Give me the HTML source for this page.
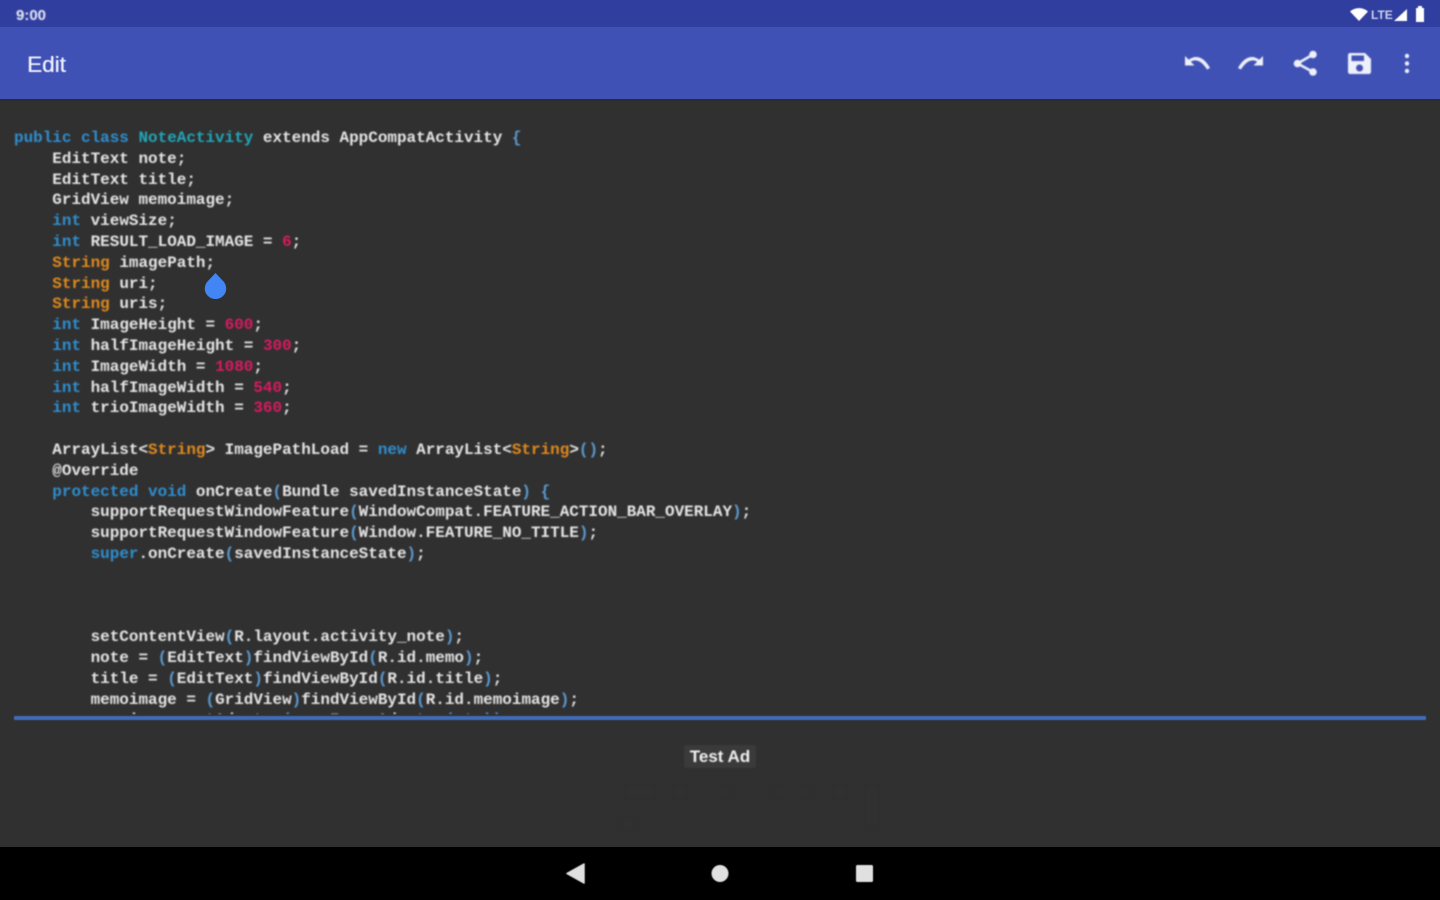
<!DOCTYPE html>
<html><head><meta charset="utf-8">
<style>
html,body{margin:0;padding:0;width:1440px;height:900px;overflow:hidden;background:#303030}
body{position:relative;font-family:"Liberation Sans",sans-serif}
.abs{position:absolute}
#status{left:0;top:0;width:1440px;height:27px;background:#303f9f}
#bar{left:0;top:27px;width:1440px;height:72px;background:#3f51b5}
#shadow{left:0;top:99px;width:1440px;height:3px;background:linear-gradient(#2a2a2a,#303030)}
#time{left:16px;top:8px;font-size:15px;line-height:15px;font-weight:bold;color:#e8eaf6;filter:blur(.7px)}
#title{left:27px;top:51px;font-size:22.5px;line-height:28px;color:#eef0fa;text-shadow:.4px 0 0 #eef0fa;filter:blur(.6px)}
#code{left:14px;top:128px;width:1412px;height:586px;overflow:hidden;margin:0;font-family:"Liberation Mono",monospace;font-size:15.96px;line-height:20.8px;color:#e6e6e6;font-weight:bold;filter:blur(.85px);white-space:pre}
.k{color:#2f8fd0}.c{color:#22a6b8}.s{color:#e08a1e}.n{color:#d81b60}.p{color:#5b9bd0}
#line{left:14px;top:716px;width:1412px;height:4px;background:#3f6cb8;filter:blur(.4px)}
#ad{left:684px;top:745px;width:72px;height:23px;background:#3a3a3a;border-radius:2px;color:#f2f2f2;font-size:17px;line-height:23px;text-align:center;font-weight:bold;filter:blur(.7px);white-space:nowrap}
#nav{left:0;top:847px;width:1440px;height:53px;background:#000}
svg{position:absolute;overflow:visible}
</style></head><body>
<div class="abs" id="status"></div>
<div class="abs" id="bar"></div>
<div class="abs" id="shadow"></div>
<div class="abs" id="time">9:00</div>
<div class="abs" id="title">Edit</div>

<svg style="left:1340px;top:0;filter:blur(.6px)" width="100" height="27" viewBox="0 0 100 27">
<path d="M10 11.500C15 7 23 7 28 11.500L19 21Z" fill="#fff"/>
<text x="31" y="19" font-family="Liberation Sans" font-size="12" font-weight="bold" fill="#c9cee8">LTE</text>
<path d="M54 21L67 9V21Z" fill="#fff"/>
<path d="M76 8H78V6H82V8H84V22H76Z" fill="#fff"/>
</svg>

<svg style="left:1170px;top:40px;filter:blur(.8px)" width="260" height="48" viewBox="0 0 260 48" fill="#eef0fa">
<path d="M15 16V25.500H24.500L20.800 21.800C23.600 19.600 30.500 18.800 37 29.500L40 28C34 16.500 25 14.500 18.800 19.800Z"/>
<path d="M93 16V25.500H83.500L87.200 21.800C84.400 19.600 77.500 18.800 71 29.500L68 28C74 16.500 83 14.500 89.200 19.800Z"/>
<g>
<circle cx="143" cy="14.500" r="3.800"/><circle cx="143" cy="32" r="3.800"/><circle cx="127.500" cy="23.500" r="3.800"/>
<path d="M127.500 23.500L143 14.500M127.500 23.500L143 32" stroke="#eef0fa" stroke-width="2.500" fill="none"/>
</g>
<path fill-rule="evenodd" d="M180 13H195L201 19V32C201 33 200 34 199 34H180C179 34 178 33 178 32V15C178 14 179 13 180 13ZM181.500 15.500V21H194V15.500ZM189.500 24.500A3.500 3.500 0 1 0 189.600 31.500A3.500 3.500 0 1 0 189.500 24.500Z"/>
<circle cx="237" cy="16" r="2.200"/><circle cx="237" cy="23.500" r="2.200"/><circle cx="237" cy="31" r="2.200"/>
</svg>

<pre class="abs" id="code"><span class="k">public class</span> <span class="c">NoteActivity</span> extends AppCompatActivity <span class="p">{</span>
    EditText note;
    EditText title;
    GridView memoimage;
    <span class="k">int</span> viewSize;
    <span class="k">int</span> RESULT_LOAD_IMAGE = <span class="n">6</span>;
    <span class="s">String</span> imagePath;
    <span class="s">String</span> uri;
    <span class="s">String</span> uris;
    <span class="k">int</span> ImageHeight = <span class="n">600</span>;
    <span class="k">int</span> halfImageHeight = <span class="n">300</span>;
    <span class="k">int</span> ImageWidth = <span class="n">1080</span>;
    <span class="k">int</span> halfImageWidth = <span class="n">540</span>;
    <span class="k">int</span> trioImageWidth = <span class="n">360</span>;

    ArrayList&lt;<span class="s">String</span>&gt; ImagePathLoad = <span class="k">new</span> ArrayList&lt;<span class="s">String</span>&gt;<span class="p">()</span>;
    @Override
    <span class="k">protected void</span> onCreate<span class="p">(</span>Bundle savedInstanceState<span class="p">)</span> <span class="p">{</span>
        supportRequestWindowFeature<span class="p">(</span>WindowCompat.FEATURE_ACTION_BAR_OVERLAY<span class="p">)</span>;
        supportRequestWindowFeature<span class="p">(</span>Window.FEATURE_NO_TITLE<span class="p">)</span>;
        <span class="k">super</span>.onCreate<span class="p">(</span>savedInstanceState<span class="p">)</span>;



        setContentView<span class="p">(</span>R.layout.activity_note<span class="p">)</span>;
        note = <span class="p">(</span>EditText<span class="p">)</span>findViewById<span class="p">(</span>R.id.memo<span class="p">)</span>;
        title = <span class="p">(</span>EditText<span class="p">)</span>findViewById<span class="p">(</span>R.id.title<span class="p">)</span>;
        memoimage = <span class="p">(</span>GridView<span class="p">)</span>findViewById<span class="p">(</span>R.id.memoimage<span class="p">)</span>;
        memoimage.setAdapter<span class="p">(</span>new ImageAdapter<span class="p">(</span>ctx<span class="p">))</span>;</pre>

<svg style="left:200px;top:270px" width="30" height="32" viewBox="0 0 30 32">
<path d="M15.500 3L24 12C27 16 27 22 23.500 25.500C21.500 27.800 18.500 29 15.500 29C12.500 29 9.500 27.800 7.500 25.500C4 22 4 16 7 12Z" fill="#4285f4"/>
</svg>

<div class="abs" id="line"></div>
<div class="abs" id="ad">Test Ad</div>

<svg style="left:620px;top:770px;opacity:.25;filter:blur(.6px)" width="320" height="70" viewBox="0 0 320 70" fill="none" stroke="#2c2c2c" stroke-width="1.500">
<rect x="5" y="15" width="30" height="14"/><rect x="53" y="15" width="14" height="14"/><rect x="100" y="15" width="14" height="14"/><rect x="150" y="15" width="14" height="14"/><rect x="180" y="15" width="14" height="14"/><rect x="213" y="15" width="14" height="14"/><rect x="245" y="15" width="14" height="45"/><rect x="-2" y="47" width="20" height="14"/>
</svg>

<div class="abs" id="nav"></div>
<svg style="left:540px;top:847px;filter:blur(.6px)" width="360" height="53" viewBox="0 0 360 53" fill="#e0e0e0">
<path d="M44 17V36L27 26.500Z" stroke="#e0e0e0" stroke-width="1.500" stroke-linejoin="round"/>
<circle cx="180" cy="26.500" r="8.500"/>
<rect x="316" y="18" width="17" height="17" rx="1.500"/>
</svg>
</body></html>
